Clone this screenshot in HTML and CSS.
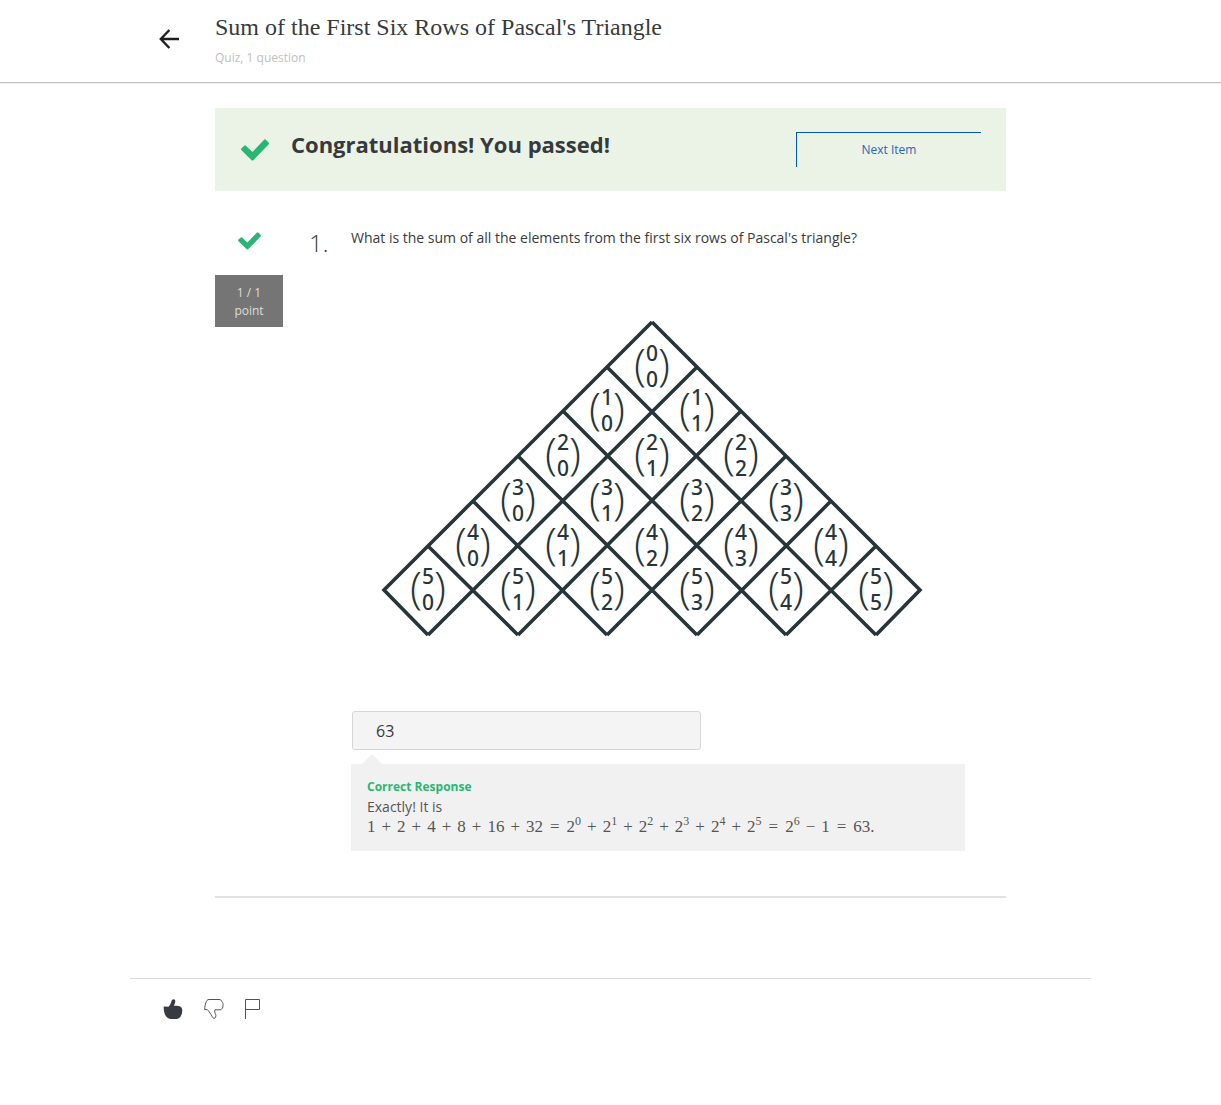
FILE: index.html
```html
<!DOCTYPE html>
<html lang="en">
<head>
<meta charset="utf-8">
<meta name="viewport" content="width=device-width, initial-scale=1">
<title>Sum of the First Six Rows of Pascal's Triangle</title>
<link rel="stylesheet" href="styles.css">
</head>
<body>
<header class="topbar">
  <div class="container topbar-inner">
    <a class="back" href="#" aria-label="Back">
      <svg width="20" height="20" viewBox="0 0 20 20" fill="none" stroke="#1f1f1f" stroke-width="2.4"><path d="M10.4 1 1.8 10l8.6 9M1.8 10H20"/></svg>
    </a>
    <div class="heading">
      <h1 class="title">Sum of the First Six Rows of Pascal's Triangle</h1>
      <p class="subtitle">Quiz, 1 question</p>
    </div>
  </div>
</header>

<main class="content">
  <section class="banner">
    <svg class="banner-check" width="28" height="22" viewBox="0 0 28 22"><path fill="#2ab573" d="M27.5 5.6 12.6 20.9a1.6 1.6 0 0 1-2.3 0L.5 11.2a1.4 1.4 0 0 1 0-2L3 6.9a1.5 1.5 0 0 1 2.2 0L11.4 12.9 22.9.9a1.5 1.5 0 0 1 2.2 0l2.4 2.6a1.5 1.5 0 0 1 0 2.1z"/></svg>
    <h2 class="banner-title">Congratulations! You passed!</h2>
    <button class="next" type="button">Next Item</button>
  </section>

  <section class="question">
    <div class="score">
      <svg class="score-check" width="23" height="18" viewBox="0 0 28 22"><path fill="#2ab573" d="M27.5 5.6 12.6 20.9a1.6 1.6 0 0 1-2.3 0L.5 11.2a1.4 1.4 0 0 1 0-2L3 6.9a1.5 1.5 0 0 1 2.2 0L11.4 12.9 22.9.9a1.5 1.5 0 0 1 2.2 0l2.4 2.6a1.5 1.5 0 0 1 0 2.1z"/></svg>
      <div class="points">1 / 1<br>point</div>
    </div>
    <div class="number">1.</div>
    <div class="body">
      <label class="prompt" for="answer">What is the sum of all the elements from the first six rows of Pascal's triangle?</label>
      <svg class="triangle" viewBox="0 0 614 320" role="img" aria-label="First six rows of Pascal's triangle as binomial coefficients">
        <defs>
          <g id="p"><text class="paren" x="-12" y="14">(</text><text class="paren" x="12" y="14">)</text></g>
        </defs>
        <g transform="translate(301 3)">
          <path class="grid" d="M0 0 268 268 224 313M-45 45 224 313M-89 89 134 313M-134 134 45 313M-179 179-45 313M-224 224-134 313M0 0-268 268-224 313M45 45-224 313M89 89-134 313M134 134-45 313M179 179 45 313M224 224 134 313"/>
          <g transform="translate(0 45)"><use href="#p"/><text y="-6">0</text><text y="20">0</text></g>

          <g transform="translate(-45 89)"><use href="#p"/><text y="-6">1</text><text y="20">0</text></g>
          <g transform="translate(45 89)"><use href="#p"/><text y="-6">1</text><text y="20">1</text></g>

          <g transform="translate(-89 134)"><use href="#p"/><text y="-6">2</text><text y="20">0</text></g>
          <g transform="translate(0 134)"><use href="#p"/><text y="-6">2</text><text y="20">1</text></g>
          <g transform="translate(89 134)"><use href="#p"/><text y="-6">2</text><text y="20">2</text></g>

          <g transform="translate(-134 179)"><use href="#p"/><text y="-6">3</text><text y="20">0</text></g>
          <g transform="translate(-45 179)"><use href="#p"/><text y="-6">3</text><text y="20">1</text></g>
          <g transform="translate(45 179)"><use href="#p"/><text y="-6">3</text><text y="20">2</text></g>
          <g transform="translate(134 179)"><use href="#p"/><text y="-6">3</text><text y="20">3</text></g>

          <g transform="translate(-179 224)"><use href="#p"/><text y="-6">4</text><text y="20">0</text></g>
          <g transform="translate(-89 224)"><use href="#p"/><text y="-6">4</text><text y="20">1</text></g>
          <g transform="translate(0 224)"><use href="#p"/><text y="-6">4</text><text y="20">2</text></g>
          <g transform="translate(89 224)"><use href="#p"/><text y="-6">4</text><text y="20">3</text></g>
          <g transform="translate(179 224)"><use href="#p"/><text y="-6">4</text><text y="20">4</text></g>

          <g transform="translate(-224 268)"><use href="#p"/><text y="-6">5</text><text y="20">0</text></g>
          <g transform="translate(-134 268)"><use href="#p"/><text y="-6">5</text><text y="20">1</text></g>
          <g transform="translate(-45 268)"><use href="#p"/><text y="-6">5</text><text y="20">2</text></g>
          <g transform="translate(45 268)"><use href="#p"/><text y="-6">5</text><text y="20">3</text></g>
          <g transform="translate(134 268)"><use href="#p"/><text y="-6">5</text><text y="20">4</text></g>
          <g transform="translate(224 268)"><use href="#p"/><text y="-6">5</text><text y="20">5</text></g>
        </g>
      </svg>
      <input class="answer" id="answer" type="text" value="63" readonly>
      <div class="feedback">
        <p class="verdict">Correct Response</p>
        <p class="explain">Exactly! It is</p>
        <p class="formula">1<i>+</i>2<i>+</i>4<i>+</i>8<i>+</i>16<i>+</i>32<b>=</b>2<sup>0</sup><i>+</i>2<sup>1</sup><i>+</i>2<sup>2</sup><i>+</i>2<sup>3</sup><i>+</i>2<sup>4</sup><i>+</i>2<sup>5</sup><b>=</b>2<sup>6</sup><i>−</i>1<b>=</b>63.</p>
      </div>
    </div>
  </section>
</main>

<footer class="container footer">
  <button class="icon" type="button" aria-label="Like">
    <svg width="20" height="20" viewBox="0 0 20 20"><path fill="#373a40" d="M10.5.3c1.500 0 2 1.200 1.700 2.600L11 7c1.500-.2 3-.2 4 0 2.200 0 3.500 1 3.900 2.400.5 1.200.5 2.300.2 3.500.1 1.300-.2 2.200-.9 3-.3 1.800-1.400 3-2.800 3.500-1.500.8-7.400.8-9.600 0-1.500-.6-2.900-1.800-3.600-3.300C1.200 13.500.4 9.700.8 7.600l4.700.1c1.200-1 2-2.600 2.700-4.700C8.600 1.600 9.200.3 10.500.3z"/></svg>
  </button>
  <button class="icon" type="button" aria-label="Dislike">
    <svg width="20" height="20" viewBox="0 0 20 20" fill="none" stroke="#50535a" stroke-linejoin="round"><path d="M5 .5h10c1.800 0 2.700 1 3 2.300 1 1.200 1.300 2.300 1 3.600.1 2.300-.8 3.900-2.500 4.300-1.500.3-3.500.2-5.500 0-.8 1.600 0 3 .7 4.900.7 1.500-.4 3.700-1.800 3.900C8.300 18.700 7.500 15.800 6 14c-.9-1.400-1.900-2.500-2.800-3.400H.7C.6 8 1.300 5.300 2 3.500 2.600 1.700 3.300.5 5 .5z"/></svg>
  </button>
  <button class="icon" type="button" aria-label="Report">
    <svg width="16" height="20" viewBox="0 0 16 20" fill="none" stroke="#50535a"><path d="M.5 20V.5h14v10H.5"/></svg>
  </button>
</footer>
</body>
</html>
```
FILE: styles.css
```css
* { box-sizing: border-box; }

body {
  margin: 0;
  background: #fff;
  color: #373a3c;
  font-family: "Open Sans", "Noto Sans", sans-serif;
  font-size: 14px;
  line-height: 20px;
}

h1, h2, p { margin: 0; font-weight: 400; }

.container { width: 100%; max-width: 961px; margin: 0 auto; }

.topbar {
  border-bottom: 1px solid #c4c4c4;
  box-shadow: 0 1px 1px #eee;
}

.topbar-inner {
  display: flex;
  gap: 36px;
  padding: 12px 29px 15px;
}

.back { padding-top: 17px; height: 40px; }
.back svg, .icon svg { display: block; }

.title {
  font-family: "Liberation Serif", serif;
  font-size: 24px;
  line-height: 30px;
}

.subtitle {
  margin-top: 7px;
  color: #c0c0c0;
  font-size: 12px;
  line-height: 18px;
}

.content {
  width: 100%;
  max-width: 791px;
  margin: 25px auto 0;
  padding-bottom: 45px;
  border-bottom: 2px solid #e1e1e1;
}

.banner {
  display: flex;
  align-items: flex-start;
  padding: 24px 25px 24px 26px;
  background: #ebf3e7;
}

.banner-check { margin: 7px 22px 0 0; }

.banner-title {
  flex: 1;
  font-size: 22px;
  font-weight: 700;
  line-height: 24px;
}

.next {
  width: 185px;
  height: 35px;
  padding: 0;
  border: 0 solid #0156b8;
  border-width: 1px 0 0 1px;
  background: none;
  color: #2a64b8;
  font: 12px/18px "Open Sans", sans-serif;
}

.question { display: flex; padding: 36px 41px 0 0; }

.score { width: 68px; text-align: center; }
.score-check { display: block; margin: 5px auto 0; }

.points {
  margin-top: 25px;
  padding: 9px 0 7px;
  background: #757575;
  color: #ddd;
  font-size: 12px;
  line-height: 18px;
}

.number {
  width: 68px;
  padding-left: 26px;
  font-size: 24px;
  font-weight: 300;
  line-height: 32px;
}

.body { flex: 1; min-width: 0; }
.prompt { display: block; line-height: 22px; }

.triangle { display: block; width: 100%; margin-top: 70px; }
.triangle text {
  fill: #263539;
  font-family: "Noto Sans", "Open Sans", sans-serif;
  font-size: 21px;
  font-weight: 500;
  text-anchor: middle;
}
.triangle .paren {
  font-family: "Open Sans", sans-serif;
  font-size: 44px;
  font-weight: 300;
}
.grid { fill: none; stroke: #263539; stroke-width: 3.6; }

.answer {
  display: block;
  width: 349px;
  max-width: 100%;
  height: 39px;
  margin: 72px 0 14px 1px;
  padding: 0 23px;
  border: 1px solid #d6d6d6;
  border-radius: 3px;
  background: #f4f4f4;
  color: #373a3c;
  font: 16px/24px "Open Sans", sans-serif;
}

.feedback {
  position: relative;
  padding: 13px 16px 14px;
  background: #f1f1f1;
  color: #555;
}

.feedback::before {
  content: "";
  position: absolute;
  top: -10px;
  left: 11px;
  border: solid transparent;
  border-width: 0 10px 10px;
  border-bottom-color: #f1f1f1;
}

.verdict { color: #2ab573; font-size: 12px; font-weight: 700; }

.formula { font-family: "Liberation Serif", serif; font-size: 17px; }
.formula i { margin: 0 6px; font-style: normal; }
.formula b { margin: 0 7px; font-weight: 400; }
.formula sup { font-size: 12px; line-height: 0; }

.footer {
  display: flex;
  gap: 21px;
  margin-top: 80px;
  padding: 20px 33px 84px;
  border-top: 1px solid #d9d9d9;
}

.icon { padding: 0; border: 0; background: none; }
```
